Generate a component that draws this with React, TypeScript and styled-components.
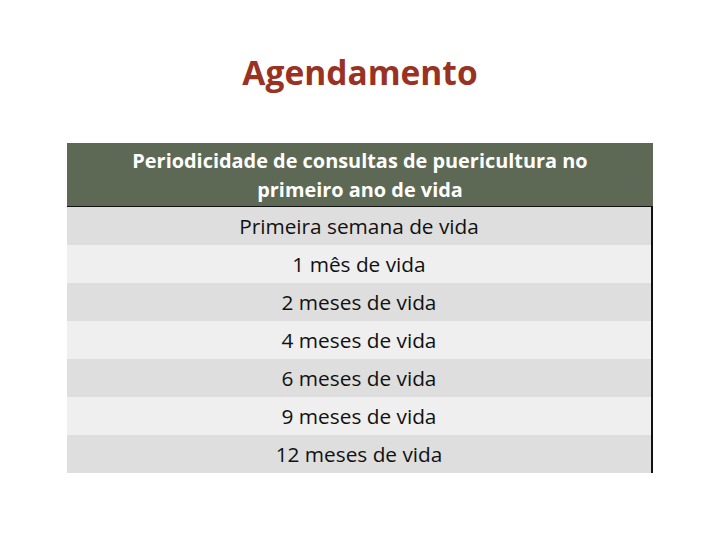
import React from "react";
import styled, { createGlobalStyle } from "styled-components";

const GlobalStyle = createGlobalStyle`
  html, body {
    margin: 0;
    padding: 0;
    background: #ffffff;
  }
  body {
    font-family: "Open Sans", "Liberation Sans", Arial, sans-serif;
  }
`;

const Page = styled.div`
  width: 720px;
  height: 540px;
  display: flex;
  flex-direction: column;
  align-items: flex-start;
`;

const Title = styled.h1`
  align-self: stretch;
  margin: 52px 0 0;
  height: 40px;
  line-height: 40px;
  text-align: center;
  color: #9a3224;
  font-size: 33.5px;
  font-weight: 700;
`;

const Table = styled.div`
  margin: 51px 0 0 67px;
  width: 586px;
  border-right: 2px solid #111;
  box-sizing: border-box;
  display: flex;
  flex-direction: column;
`;

const Header = styled.div`
  background: #5e6955;
  color: #ffffff;
  height: 63px;
  border-bottom: 1.5px solid #111;
  margin-right: -2px;
  display: flex;
  align-items: center;
  justify-content: center;
  text-align: center;
  font-size: 19.9px;
  font-weight: 700;
  line-height: 29px;
  padding: 0 10px;
`;

const Row = styled.div<{ alt: boolean }>`
  height: 38px;
  background: ${({ alt }) => (alt ? "#efefef" : "#dedede")};
  color: #111;
  display: flex;
  align-items: center;
  justify-content: center;
  font-size: 20.8px;
  padding-bottom: 1px;
  box-sizing: border-box;
`;

const rows = [
  "Primeira semana de vida",
  "1 mês de vida",
  "2 meses de vida",
  "4 meses de vida",
  "6 meses de vida",
  "9 meses de vida",
  "12 meses de vida",
];

export default function App() {
  return (
    <Page>
      <GlobalStyle />
      <Title>Agendamento</Title>
      <Table>
        <Header>
          Periodicidade de consultas de puericultura no
          <br />
          primeiro ano de vida
        </Header>
        {rows.map((r, i) => (
          <Row key={r} alt={i % 2 === 1}>
            {r}
          </Row>
        ))}
      </Table>
    </Page>
  );
}
